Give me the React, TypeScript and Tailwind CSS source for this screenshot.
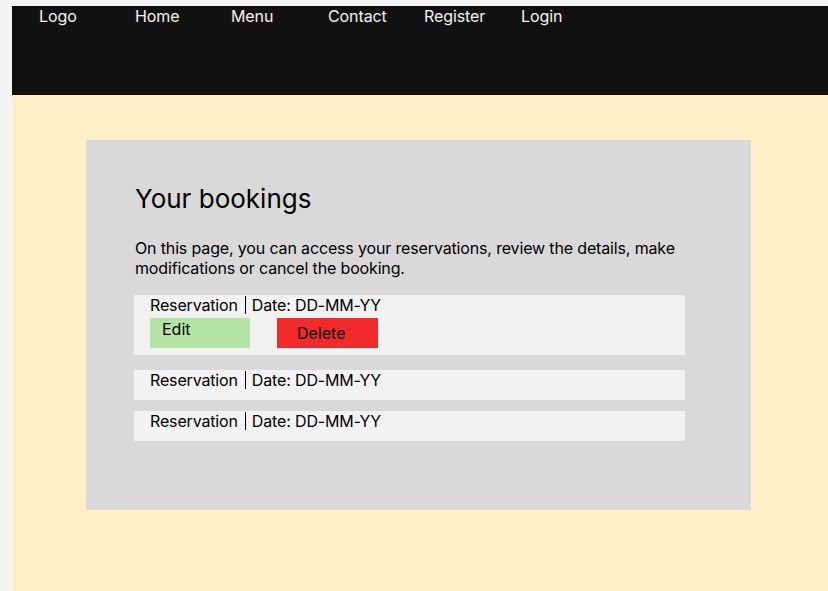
import React from "react";

const navItems = [
  { label: "Logo", w: "w-[96px]" },
  { label: "Home", w: "w-[96px]" },
  { label: "Menu", w: "w-[97px]" },
  { label: "Contact", w: "w-[96px]" },
  { label: "Register", w: "w-[97px]" },
  { label: "Login", w: "w-[96px]" },
];

const ReservationLabel: React.FC = () => (
  <div className="flex items-center text-base leading-5 text-black tracking-[-0.15px]">
    <span>Reservation</span>
    <span className="ml-[7px] mr-[6px] h-[18px] w-px bg-black" />
    <span>Date: DD-MM-YY</span>
  </div>
);

export default function App() {
  return (
    <div
      className="min-h-screen bg-[#f5f5f5] pl-[12px] pt-[6px] flex flex-col"
      style={{ fontFamily: "Inter, 'Noto Sans', sans-serif" }}
    >
      {/* Header */}
      <header className="h-[89px] bg-[#111111] pl-[27px] flex items-start">
        {navItems.map((item) => (
          <a
            key={item.label}
            className={`${item.w} text-base leading-5 text-[#f2f2f2] tracking-[-0.1px]`}
          >
            {item.label}
          </a>
        ))}
      </header>

      {/* Body */}
      <main className="flex-1 bg-[#fff0c9] pl-[74px] pt-[45px] pb-[81px]">
        <section className="w-[665px] h-[370px] bg-[#d9d9d9] pl-[48px] pt-[43px]">
          <h1 className="text-[26px] leading-8 text-black ml-px">Your bookings</h1>
          <p className="mt-[23px] w-[551px] text-base leading-5 text-black ml-px tracking-[-0.15px]">
            On this page, you can access your reservations, review the details, make
            modifications or cancel the booking.
          </p>

          <div className="mt-[17px] w-[551px] flex flex-col">
            <div className="h-[60px] bg-[#f2f2f2] pl-[16px]">
              <ReservationLabel />
              <div className="mt-[3px] flex gap-[27px]">
                <button className="w-[100px] h-[30px] bg-[#b5e5a6] text-left pl-[12px] pt-px leading-5 text-base text-black flex items-start">
                  Edit
                </button>
                <button className="w-[101px] h-[30px] bg-[#f12b2b] text-left pl-[20px] pt-[5px] leading-5 text-base text-black flex items-start">
                  Delete
                </button>
              </div>
            </div>
            <div className="mt-[15px] h-[30px] bg-[#f2f2f2] pl-[16px]">
              <ReservationLabel />
            </div>
            <div className="mt-[11px] h-[30px] bg-[#f2f2f2] pl-[16px]">
              <ReservationLabel />
            </div>
          </div>
        </section>
      </main>
    </div>
  );
}
